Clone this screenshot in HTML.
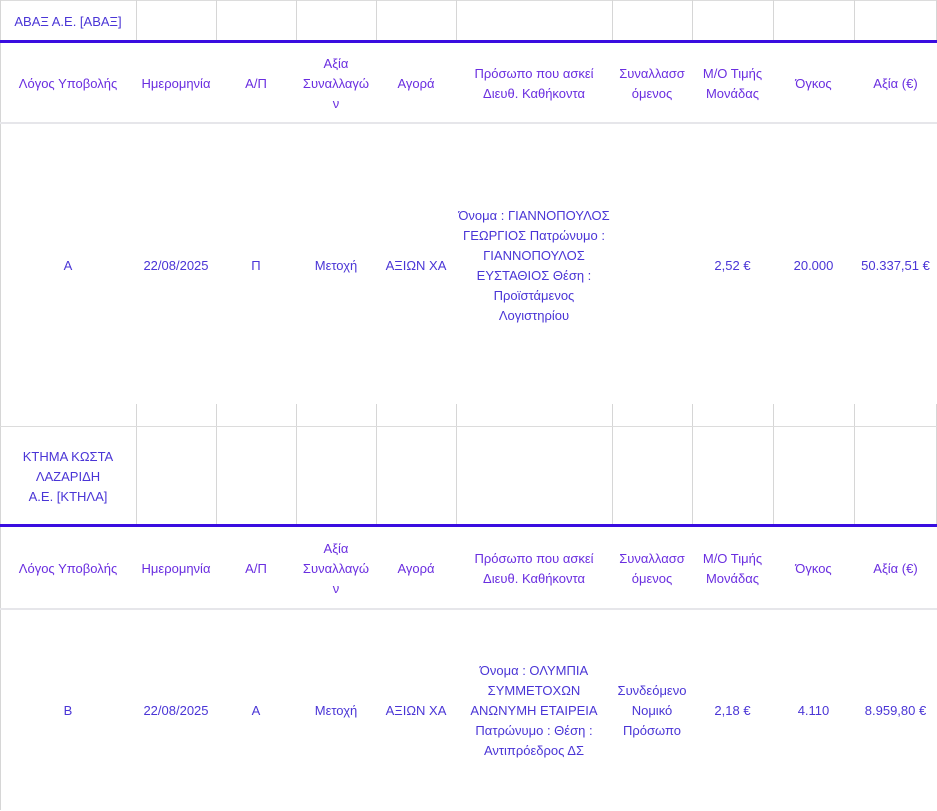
<!DOCTYPE html>
<html><head><meta charset="utf-8"><style>
body{margin:0;width:937px;height:810px;background:#fff;position:relative;overflow:hidden;font-family:"Liberation Sans","DejaVu Sans",sans-serif;font-size:13px;line-height:20px;color:#4a35d6}
.c{position:absolute;display:flex;align-items:center;justify-content:center;text-align:center;white-space:nowrap;padding-top:1px}
.h{color:#6a2ee0}
.v{position:absolute;width:1px;background:#d6d6d6}
.hl{position:absolute;left:0;width:937px;height:1px;background:#dcdcdc}
.th{position:absolute;left:0;width:937px;height:3px;background:#3a0de0}
</style></head><body>
<div class="hl" style="top:0"></div>
<div class="v" style="left:0;top:0;height:40px"></div>
<div class="v" style="left:136px;top:0;height:40px"></div>
<div class="v" style="left:216px;top:0;height:40px"></div>
<div class="v" style="left:296px;top:0;height:40px"></div>
<div class="v" style="left:376px;top:0;height:40px"></div>
<div class="v" style="left:456px;top:0;height:40px"></div>
<div class="v" style="left:612px;top:0;height:40px"></div>
<div class="v" style="left:692px;top:0;height:40px"></div>
<div class="v" style="left:773px;top:0;height:40px"></div>
<div class="v" style="left:854px;top:0;height:40px"></div>
<div class="v" style="left:936px;top:0;height:40px"></div>
<div class="c" style="left:0;width:136px;top:0;height:41px">ΑΒΑΞ Α.Ε. [ΑΒΑΞ]</div>
<div class="th" style="top:40px"></div>
<div class="v" style="left:0;top:43px;height:767px"></div>
<div class="c h" style="left:0;width:136px;top:43px;height:80px">Λόγος Υποβολής</div>
<div class="c h" style="left:136px;width:80px;top:43px;height:80px">Ημερομηνία</div>
<div class="c h" style="left:216px;width:80px;top:43px;height:80px">Α/Π</div>
<div class="c h" style="left:296px;width:80px;top:43px;height:80px">Αξία<br>Συναλλαγώ<br>ν</div>
<div class="c h" style="left:376px;width:80px;top:43px;height:80px">Αγορά</div>
<div class="c h" style="left:456px;width:156px;top:43px;height:80px">Πρόσωπο που ασκεί<br>Διευθ. Καθήκοντα</div>
<div class="c h" style="left:612px;width:80px;top:43px;height:80px">Συναλλασσ<br>όμενος</div>
<div class="c h" style="left:692px;width:81px;top:43px;height:80px">Μ/Ο Τιμής<br>Μονάδας</div>
<div class="c h" style="left:773px;width:81px;top:43px;height:80px">Όγκος</div>
<div class="c h" style="left:854px;width:83px;top:43px;height:80px">Αξία (€)</div>
<div class="hl" style="top:122px;height:2px;background:#e6e6ea"></div>
<div class="c" style="left:0;width:136px;top:124px;height:281px">Α</div>
<div class="c" style="left:136px;width:80px;top:124px;height:281px">22/08/2025</div>
<div class="c" style="left:216px;width:80px;top:124px;height:281px">Π</div>
<div class="c" style="left:296px;width:80px;top:124px;height:281px">Μετοχή</div>
<div class="c" style="left:376px;width:80px;top:124px;height:281px">ΑΞΙΩΝ ΧΑ</div>
<div class="c" style="left:456px;width:156px;top:124px;height:281px">Όνομα : ΓΙΑΝΝΟΠΟΥΛΟΣ<br>ΓΕΩΡΓΙΟΣ Πατρώνυμο :<br>ΓΙΑΝΝΟΠΟΥΛΟΣ<br>ΕΥΣΤΑΘΙΟΣ Θέση :<br>Προϊστάμενος<br>Λογιστηρίου</div>
<div class="c" style="left:692px;width:81px;top:124px;height:281px">2,52 €</div>
<div class="c" style="left:773px;width:81px;top:124px;height:281px">20.000</div>
<div class="c" style="left:854px;width:83px;top:124px;height:281px">50.337,51 €</div>
<div class="v" style="left:136px;top:404px;height:121px"></div>
<div class="v" style="left:216px;top:404px;height:121px"></div>
<div class="v" style="left:296px;top:404px;height:121px"></div>
<div class="v" style="left:376px;top:404px;height:121px"></div>
<div class="v" style="left:456px;top:404px;height:121px"></div>
<div class="v" style="left:612px;top:404px;height:121px"></div>
<div class="v" style="left:692px;top:404px;height:121px"></div>
<div class="v" style="left:773px;top:404px;height:121px"></div>
<div class="v" style="left:854px;top:404px;height:121px"></div>
<div class="v" style="left:936px;top:404px;height:121px"></div>
<div class="hl" style="top:426px"></div>
<div class="c" style="left:0;width:136px;top:427px;height:97px">ΚΤΗΜΑ ΚΩΣΤΑ<br>ΛΑΖΑΡΙΔΗ<br>Α.Ε. [ΚΤΗΛΑ]</div>
<div class="th" style="top:524px"></div>
<div class="c h" style="left:0;width:136px;top:527px;height:82px">Λόγος Υποβολής</div>
<div class="c h" style="left:136px;width:80px;top:527px;height:82px">Ημερομηνία</div>
<div class="c h" style="left:216px;width:80px;top:527px;height:82px">Α/Π</div>
<div class="c h" style="left:296px;width:80px;top:527px;height:82px">Αξία<br>Συναλλαγώ<br>ν</div>
<div class="c h" style="left:376px;width:80px;top:527px;height:82px">Αγορά</div>
<div class="c h" style="left:456px;width:156px;top:527px;height:82px">Πρόσωπο που ασκεί<br>Διευθ. Καθήκοντα</div>
<div class="c h" style="left:612px;width:80px;top:527px;height:82px">Συναλλασσ<br>όμενος</div>
<div class="c h" style="left:692px;width:81px;top:527px;height:82px">Μ/Ο Τιμής<br>Μονάδας</div>
<div class="c h" style="left:773px;width:81px;top:527px;height:82px">Όγκος</div>
<div class="c h" style="left:854px;width:83px;top:527px;height:82px">Αξία (€)</div>
<div class="hl" style="top:608px;height:2px;background:#e6e6ea"></div>
<div class="c" style="left:0;width:136px;top:610px;height:200px">Β</div>
<div class="c" style="left:136px;width:80px;top:610px;height:200px">22/08/2025</div>
<div class="c" style="left:216px;width:80px;top:610px;height:200px">Α</div>
<div class="c" style="left:296px;width:80px;top:610px;height:200px">Μετοχή</div>
<div class="c" style="left:376px;width:80px;top:610px;height:200px">ΑΞΙΩΝ ΧΑ</div>
<div class="c" style="left:456px;width:156px;top:610px;height:200px">Όνομα : ΟΛΥΜΠΙΑ<br>ΣΥΜΜΕΤΟΧΩΝ<br>ΑΝΩΝΥΜΗ ΕΤΑΙΡΕΙΑ<br>Πατρώνυμο : Θέση :<br>Αντιπρόεδρος ΔΣ</div>
<div class="c" style="left:612px;width:80px;top:610px;height:200px">Συνδεόμενο<br>Νομικό<br>Πρόσωπο</div>
<div class="c" style="left:692px;width:81px;top:610px;height:200px">2,18 €</div>
<div class="c" style="left:773px;width:81px;top:610px;height:200px">4.110</div>
<div class="c" style="left:854px;width:83px;top:610px;height:200px">8.959,80 €</div>
</body></html>
